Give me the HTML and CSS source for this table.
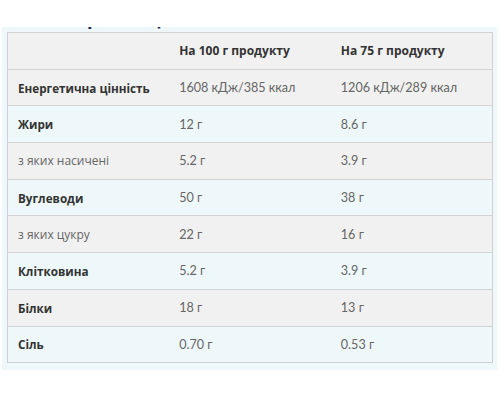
FILE: index.html
```html
<!DOCTYPE html>
<html lang="uk">
<head>
<meta charset="utf-8">
<link rel="stylesheet" href="styles.css">
</head>
<body>
<div class="panel">
  <div class="title-clip"><h2 class="title">Харчова цінність</h2></div>
  <table class="nutri">
    <tr class="grey head">
      <th></th>
      <th>На 100 г продукту</th>
      <th>На 75 г продукту</th>
    </tr>
    <tr class="grey">
      <td class="lbl">Енергетична цінність</td>
      <td>1608 кДж/385 ккал</td>
      <td>1206 кДж/289 ккал</td>
    </tr>
    <tr class="blue">
      <td class="lbl">Жири</td>
      <td>12 г</td>
      <td>8.6 г</td>
    </tr>
    <tr class="grey">
      <td class="sub">з яких насичені</td>
      <td>5.2 г</td>
      <td>3.9 г</td>
    </tr>
    <tr class="blue">
      <td class="lbl">Вуглеводи</td>
      <td>50 г</td>
      <td>38 г</td>
    </tr>
    <tr class="grey">
      <td class="sub">з яких цукру</td>
      <td>22 г</td>
      <td>16 г</td>
    </tr>
    <tr class="blue">
      <td class="lbl">Клітковина</td>
      <td>5.2 г</td>
      <td>3.9 г</td>
    </tr>
    <tr class="grey">
      <td class="lbl">Білки</td>
      <td>18 г</td>
      <td>13 г</td>
    </tr>
    <tr class="blue">
      <td class="lbl">Сіль</td>
      <td>0.70 г</td>
      <td>0.53 г</td>
    </tr>
  </table>
</div>
</body>
</html>
```
FILE: styles.css
```css
html, body {
  margin: 0;
  padding: 0;
  background: #ffffff;
}
body {
  padding: 27px 3px 0 2px;
  font-family: "Open Sans", "Liberation Sans", sans-serif;
}
.panel {
  background: #eef7f9;
  padding: 0 5px 8px 5px;
  height: 343px;
  box-sizing: border-box;
}
.title-clip {
  height: 5px;
  overflow: hidden;
  padding-left: 57px;
}
.title {
  margin: -21px 0 0 0;
  font-size: 18px;
  line-height: 24px;
  font-weight: 700;
  color: #1c2550;
}
.nutri {
  width: 486px;
  border-collapse: collapse;
  border: 1px solid #cfcfcf;
  table-layout: fixed;
}
.nutri tr {
  height: 36.7px;
}
.nutri td, .nutri th {
  border-top: 1px solid #d2d2d2;
  padding: 0 10px;
  text-align: left;
  vertical-align: middle;
  white-space: nowrap;
}
.nutri th {
  font-weight: 700;
  color: #333333;
  font-size: 12px;
}
.nutri td {
  font-family: "Lato", "Liberation Sans", sans-serif;
  font-weight: 400;
  color: #666666;
  font-size: 12.6px;
}
.nutri td.lbl {
  font-family: "Open Sans", "Liberation Sans", sans-serif;
  font-weight: 700;
  color: #333333;
  font-size: 11.7px;
}
.nutri td.sub {
  font-family: "Open Sans", "Liberation Sans", sans-serif;
  font-weight: 400;
  color: #666666;
  font-size: 12px;
}
.grey {
  background: #f1f1f1;
}
.blue {
  background: #eef8fa;
}
```
